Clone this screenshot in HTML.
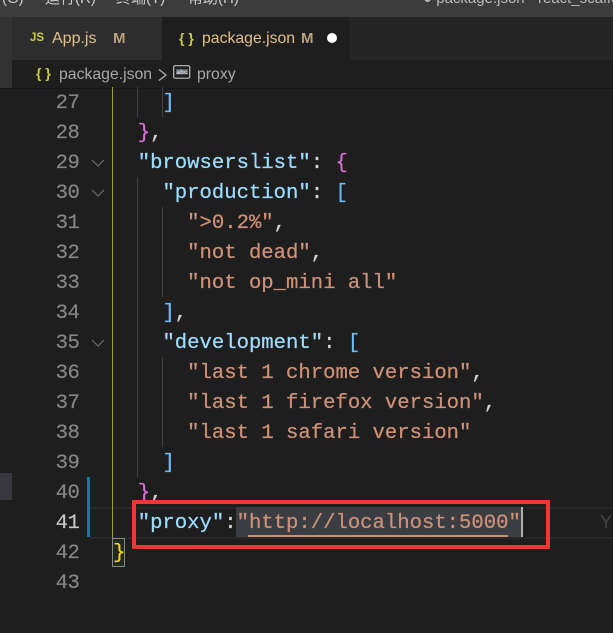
<!DOCTYPE html>
<html><head><meta charset="utf-8"><style>
html,body{margin:0;padding:0;background:#1e1e1e}
#r{position:relative;width:613px;height:633px;overflow:hidden;background:#1e1e1e;font-family:"Liberation Mono",monospace;font-size:20.6px}
#r div{position:absolute}
.n{left:40px;width:39.5px;text-align:right;color:#858585;height:30px;line-height:30px;letter-spacing:-.4px;margin-top:2px;-webkit-text-stroke:.2px}
.l{left:113px;height:30px;line-height:30px;white-space:pre;color:#d4d4d4;margin-top:2px;-webkit-text-stroke:.25px}
.k{color:#9cdcfe}.s{color:#ce9178}.p{color:#da70d6}.b{color:#6cbcf5}.y{color:#ffd700}
.u{font-family:"Liberation Sans","Noto Sans CJK SC",sans-serif}
.g{width:1px;background:#404040}
</style></head><body><div id="r">
<div style="left:0;top:0;width:613px;height:17px;background:#3c3c3c;overflow:hidden"></div>
<div class="u" style="left:2px;top:-11px;color:#ccc;font-size:15px;line-height:20px;white-space:pre">(G)</div>
<div class="u" style="left:45px;top:-11px;color:#ccc;font-size:15px;line-height:20px;white-space:pre">运行(R)</div>
<div class="u" style="left:116px;top:-11px;color:#ccc;font-size:15px;line-height:20px;white-space:pre">终端(T)</div>
<div class="u" style="left:188px;top:-11px;color:#ccc;font-size:15px;line-height:20px;white-space:pre">帮助(H)</div>
<div class="u" style="left:423px;top:-11px;color:#bbb;font-size:15px;line-height:20px;white-space:pre">● package.json - react_scaffold</div>

<div style="left:0;top:17px;width:12px;height:71px;background:#333"></div>
<div style="left:12px;top:17px;width:601px;height:43px;background:#252526"></div>
<div style="left:12px;top:17px;width:150px;height:43px;background:#2d2d2d"></div>
<div style="left:162px;top:17px;width:188px;height:43px;background:#1e1e1e"></div>
<div style="left:12px;top:60px;width:601px;height:28px;background:#1e1e1e"></div>
<div style="left:0;top:88px;width:613px;height:1px;background:#161616"></div>

<div class="u" style="left:30px;top:31px;color:#cbcb41;font-size:11.5px;font-weight:bold;line-height:14px">JS</div>
<div class="u" style="left:52px;top:29px;color:#e2c08d;font-size:16px;line-height:20px">App.js</div>
<div class="u" style="left:113px;top:29px;color:#b8a07c;font-size:15px;font-weight:bold;line-height:20px">M</div>

<div class="u" style="left:179px;top:29px;color:#cbcb41;font-size:14px;font-weight:bold;line-height:18px">{ }</div>
<div class="u" style="left:202px;top:29px;color:#e2c08d;font-size:15.8px;line-height:20px">package.json</div>
<div class="u" style="left:301px;top:29px;color:#b8a07c;font-size:15px;font-weight:bold;line-height:20px">M</div>
<div style="left:327px;top:33px;width:10px;height:10px;border-radius:50%;background:#fff"></div>

<div class="u" style="left:36px;top:64px;color:#cbcb41;font-size:14px;font-weight:bold;line-height:18px">{ }</div>
<div class="u" style="left:59px;top:65px;color:#a9a9a9;font-size:15.8px;line-height:20px">package.json</div>
<svg style="position:absolute;left:157px;top:68px" width="12" height="14"><path d="M2 1.500L9 7L2 12.500" fill="none" stroke="#b5b5b5" stroke-width="1.200"/></svg>
<svg style="position:absolute;left:173px;top:65px" width="18" height="15"><rect x=".7" y=".7" width="16" height="12.500" rx="1.500" fill="none" stroke="#c0c0c0" stroke-width="1.200"/><rect x="3" y="4" width="12" height="5.500" fill="#5a6068"/><text x="9" y="9" font-family="Liberation Sans" font-size="6.500" font-weight="bold" fill="#e0e0e0" text-anchor="middle">abc</text></svg>
<div class="u" style="left:197px;top:65px;color:#a9a9a9;font-size:15.8px;line-height:20px">proxy</div>

<div style="left:0;top:473px;width:12px;height:27px;background:#37373d"></div>
<div style="left:87px;top:477px;width:3px;height:60px;background:#0c7d9d"></div>

<div style="left:90px;top:507px;width:523px;height:28px;border-top:2px solid #282828;border-bottom:2px solid #282828"></div>
<div style="left:236px;top:507px;width:285px;height:30px;background:#3a3d41"></div>
<div style="left:248px;top:534.500px;width:260px;height:2px;background:#ce9178"></div>
<div style="left:521px;top:507px;width:2px;height:30px;background:#aeafad"></div>

<div style="left:112px;top:87px;width:1px;height:451px;background:#a89a26"></div>
<div class="g" style="left:137px;top:87px;height:30px"></div>
<div class="g" style="left:137px;top:177px;height:300px"></div>
<div class="g" style="left:162px;top:87px;height:30px"></div>
<div class="g" style="left:162px;top:207px;height:90px"></div>
<div class="g" style="left:162px;top:357px;height:90px"></div>

<div class="n" style="top:87px">27</div><div class="l" style="top:87px">    <span class="b">]</span></div>
<div class="n" style="top:117px">28</div><div class="l" style="top:117px">  <span class="p">}</span>,</div>
<div class="n" style="top:147px">29</div><div class="l" style="top:147px">  <span class="k">"browserslist"</span>: <span class="p">{</span></div>
<div class="n" style="top:177px">30</div><div class="l" style="top:177px">    <span class="k">"production"</span>: <span class="b">[</span></div>
<div class="n" style="top:207px">31</div><div class="l" style="top:207px">      <span class="s">"&gt;0.2%"</span>,</div>
<div class="n" style="top:237px">32</div><div class="l" style="top:237px">      <span class="s">"not dead"</span>,</div>
<div class="n" style="top:267px">33</div><div class="l" style="top:267px">      <span class="s">"not op_mini all"</span></div>
<div class="n" style="top:297px">34</div><div class="l" style="top:297px">    <span class="b">]</span>,</div>
<div class="n" style="top:327px">35</div><div class="l" style="top:327px">    <span class="k">"development"</span>: <span class="b">[</span></div>
<div class="n" style="top:357px">36</div><div class="l" style="top:357px">      <span class="s">"last 1 chrome version"</span>,</div>
<div class="n" style="top:387px">37</div><div class="l" style="top:387px">      <span class="s">"last 1 firefox version"</span>,</div>
<div class="n" style="top:417px">38</div><div class="l" style="top:417px">      <span class="s">"last 1 safari version"</span></div>
<div class="n" style="top:447px">39</div><div class="l" style="top:447px">    <span class="b">]</span></div>
<div class="n" style="top:477px">40</div><div class="l" style="top:477px">  <span class="p">}</span>,</div>
<div class="n" style="top:507px;color:#c6c6c6">41</div><div class="l" style="top:507px">  <span class="k">"proxy"</span>:<span class="s">"http://localhost:5000"</span></div>
<div class="n" style="top:537px">42</div>
<div style="left:112px;top:538px;width:11px;height:27px;border:1px solid #888;background:#1f2a1f"></div>
<div class="l" style="top:537px"><span class="y">}</span></div>
<div class="n" style="top:567px">43</div>

<svg style="position:absolute;left:90px;top:155px" width="16" height="14"><path d="M2 5L8 11L14 5" fill="none" stroke="#6e6e6e" stroke-width="1.200"/></svg>
<svg style="position:absolute;left:90px;top:185px" width="16" height="14"><path d="M2 5L8 11L14 5" fill="none" stroke="#6e6e6e" stroke-width="1.200"/></svg>
<svg style="position:absolute;left:90px;top:335px" width="16" height="14"><path d="M2 5L8 11L14 5" fill="none" stroke="#6e6e6e" stroke-width="1.200"/></svg>

<div class="u" style="left:600px;top:510px;color:#444;font-size:18px;line-height:24px">Y</div>
<div style="left:132px;top:500px;width:410px;height:41px;border:4px solid #f03535;border-radius:1px"></div>
</div></body></html>
